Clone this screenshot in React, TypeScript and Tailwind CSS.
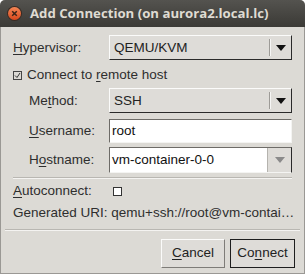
import React from "react";

const U = ({ c }: { c: string }) => <span className="underline underline-offset-2 decoration-1">{c}</span>;

function Arrow({ gray }: { gray?: boolean }) {
  return (
    <svg width="10" height="6" viewBox="0 0 10 6">
      <polygon points="0,0 10,0 5,6" fill={gray ? "#8a8a8a" : "#111"} />
    </svg>
  );
}

function Combo({ value }: { value: string }) {
  return (
    <div className="flex h-[25px] w-[186px] items-center border border-t-[#fbfbfa] border-l-[#fbfbfa] border-r-[#2a2a2a] border-b-[#2a2a2a] bg-[#dedcd8]">
      <div className="flex-1 pl-[4px] text-[#222]">{value}</div>
      <div className="h-[17px] w-[1px] bg-[#9d9b97]" />
      <div className="h-[17px] w-[1px] bg-[#f6f6f5]" />
      <div className="flex w-[20px] items-center justify-center">
        <Arrow />
      </div>
    </div>
  );
}

function Label({ children, indent }: { children: React.ReactNode; indent?: boolean }) {
  return <div className={(indent ? "pl-[16px] " : "") + "w-[96px] shrink-0 text-[#2e2e2e]"}>{children}</div>;
}

export default function App() {
  return (
    <div
      className="relative h-[274px] w-[305px] overflow-hidden rounded-t-[5px] bg-[#dcdad5] text-[13.5px] leading-none"
      style={{ fontFamily: '"Liberation Sans", Arial, sans-serif' }}
    >
      <div className="flex h-[27px] items-center bg-gradient-to-b from-[#54534f] to-[#3b3a36] pl-[8px]">
        <div className="flex h-[13px] w-[13px] items-center justify-center rounded-full bg-gradient-to-b from-[#f48553] to-[#d8461a] shadow-[0_0_0_1px_#3a2a22]">
          <svg width="7" height="7" viewBox="0 0 7 7">
            <path d="M1.2 1.2 L5.8 5.8 M5.8 1.2 L1.2 5.8" stroke="#3a2418" strokeWidth="1.5" />
          </svg>
        </div>
        <div
          className="ml-[9px] text-[13.2px] font-bold text-[#dfdbd2]"
          style={{ fontFamily: '"Open Sans", "DejaVu Sans", sans-serif' }}
        >
          Add Connection (on aurora2.local.lc)
        </div>
      </div>
      <div className="flex h-[247px] flex-col border-x border-b border-[#9a9894] px-[12px] pt-[8px]">
        <div className="flex items-center">
          <Label>
            <U c="H" />ypervisor:
          </Label>
          <Combo value="QEMU/KVM" />
        </div>
        <div className="mt-[9px] flex h-[12px] items-center text-[#2e2e2e]">
          <span className="relative mr-[5px] inline-block h-[9px] w-[9px] border border-[#444]">
            <svg className="absolute left-0 top-0" width="7" height="7" viewBox="0 0 7 7">
              <path d="M1 3.5 L3 5.5 L6 1" stroke="#333" strokeWidth="1" fill="none" />
            </svg>
          </span>
          <span>
            Connect to <U c="r" />emote host
          </span>
        </div>
        <div className="mt-[7px] flex items-center">
          <Label indent>
            Me<U c="t" />hod:
          </Label>
          <Combo value="SSH" />
        </div>
        <div className="mt-[6px] flex items-center">
          <Label indent>
            <U c="U" />sername:
          </Label>
          <div className="flex h-[24px] w-[186px] items-center border border-t-[#6d6b67] border-l-[#6d6b67] border-r-[#f4f4f2] border-b-[#f4f4f2] bg-white pl-[2px] text-[#111]">
            root
          </div>
        </div>
        <div className="mt-[4px] flex items-center">
          <Label indent>
            H<U c="o" />stname:
          </Label>
          <div className="flex h-[26px] w-[186px] border border-t-[#6d6b67] border-l-[#6d6b67] border-r-[#2a2a2a] border-b-[#f4f4f2]">
            <div className="flex flex-1 items-center bg-white pl-[2px] text-[#111]">vm-container-0-0</div>
            <div className="flex w-[24px] items-center justify-center border-l border-[#b5b3ae] bg-[#dedcd8]">
              <Arrow gray />
            </div>
          </div>
        </div>
        <div className="mt-[4px] h-[2px] border-t border-b border-t-[#b9b7b2] border-b-[#f4f3f1]" />
        <div className="mt-[6px] flex h-[12px] items-center">
          <Label>
            <U c="A" />utoconnect:
          </Label>
          <span className="ml-[4px] inline-block h-[9px] w-[9px] border border-[#333] bg-white" />
        </div>
        <div className="mt-[9px] whitespace-nowrap text-[#2e2e2e]">Generated URI: qemu+ssh://root@vm-contai…</div>
        <div className="-mx-[8px] mt-[9px] h-[2px] border-t border-b border-t-[#b9b7b2] border-b-[#f4f3f1]" />
        <div className="-mr-[3px] mt-[8px] flex justify-end gap-[5px]">
          <div className="flex h-[29px] w-[64px] items-center justify-center border border-t-[#fbfbfa] border-l-[#fbfbfa] border-r-[#7e7c78] border-b-[#7e7c78] bg-[#dedcd8] text-[#222]">
            <span>
              <U c="C" />ancel
            </span>
          </div>
          <div className="flex h-[29px] w-[65px] items-center justify-center border border-[#1e1e1e] bg-[#dedcd8] text-[#222]">
            <span>
              Co<U c="n" />nect
            </span>
          </div>
        </div>
      </div>
    </div>
  );
}
